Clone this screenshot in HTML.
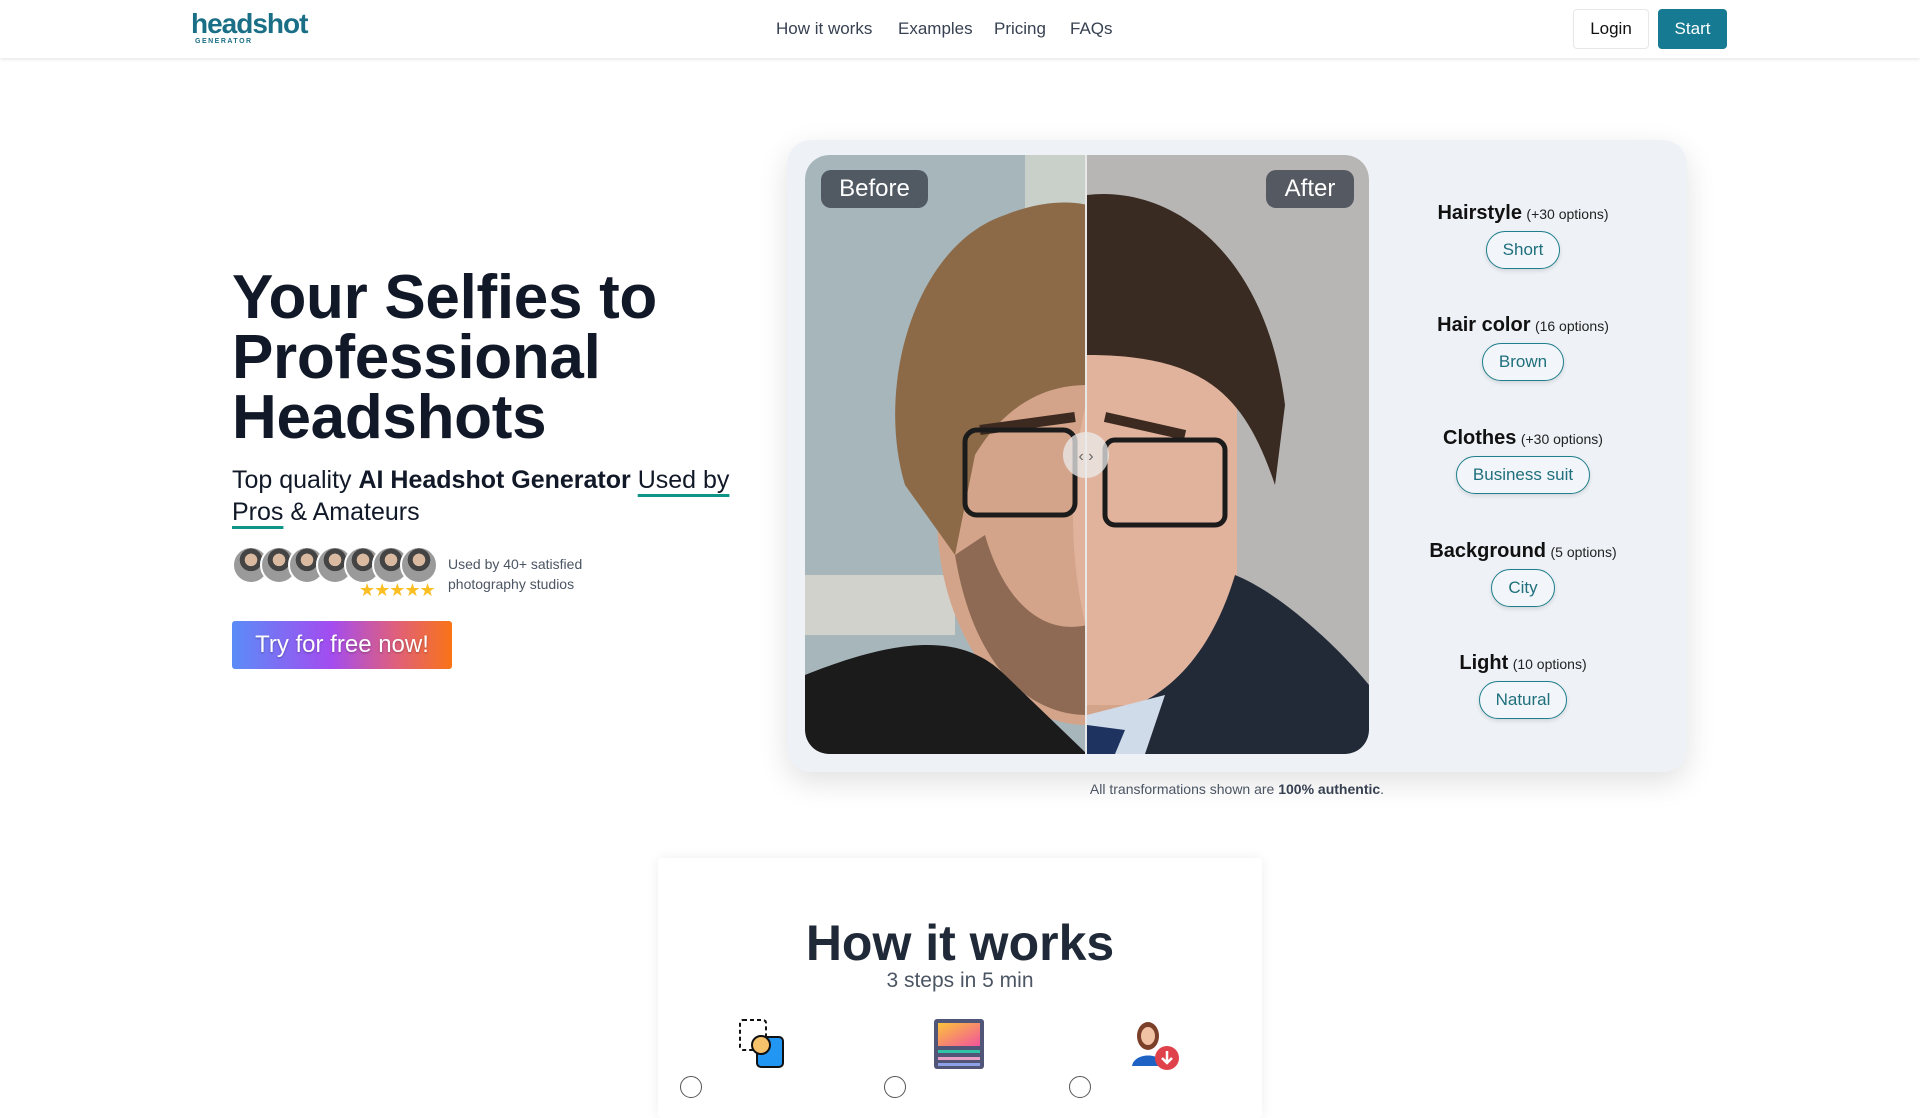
<!DOCTYPE html>
<html><head><meta charset="utf-8">
<style>
*{box-sizing:border-box;margin:0;padding:0}
body{width:1920px;height:1080px;overflow:hidden;background:#fff;font-family:"Liberation Sans",sans-serif;color:#111827;position:relative}
.abs{position:absolute}
header{position:absolute;left:0;top:0;width:1920px;height:58px;background:#fff;box-shadow:0 1px 4px rgba(0,0,0,.12)}
.nav a{position:absolute;top:19px;font-size:17px;color:#374151;text-decoration:none}
.btn{position:absolute;top:9px;height:40px;border-radius:4px;font-size:17px;display:flex;align-items:center;justify-content:center}
h1{position:absolute;left:232px;top:268px;font-size:62px;line-height:60px;font-weight:700;color:#111827;letter-spacing:-0.3px}
.sub{position:absolute;left:232px;top:464px;font-size:25px;line-height:32px;color:#111827;width:540px}
.u{text-decoration:underline;text-decoration-color:#0f9488;text-decoration-thickness:3px;text-underline-offset:6px}
.av{position:absolute;top:546px;width:38px;height:38px;border-radius:50%;border:2px solid #fff;background:radial-gradient(circle at 50% 35%,#d9b9a0 0 22%,#444 23% 40%,#9a9a9a 41%)}
.card{position:absolute;left:787px;top:140px;width:900px;height:632px;background:#eef2f7;border-radius:24px;box-shadow:0 10px 30px rgba(0,0,0,.12)}
.opt{position:absolute;width:300px;left:1373px;text-align:center}
.opt b{font-size:20px;color:#111}
.opt span{font-size:14px;color:#222}
.opt .pill{display:inline-block;margin-top:6px;border:1.5px solid #1f7f8c;color:#1f6f7c;border-radius:20px;padding:8px 16px;font-size:17px;background:#f2f6fa;box-shadow:0 2px 4px rgba(0,0,0,.12)}
.lab{position:absolute;top:170px;height:38px;border-radius:10px;background:rgba(60,66,78,.8);color:#fff;font-size:24px;display:flex;align-items:center;justify-content:center}
</style></head><body>
<header>
 <div class="abs" style="left:191px;top:8px;font-size:28px;font-weight:700;color:#1a6f86;letter-spacing:-1px">headshot</div>
 <div class="abs" style="left:195px;top:38px;font-size:7px;font-weight:700;color:#1a6f86;letter-spacing:1.5px">GENERATOR</div>
 <div class="nav"><a style="left:776px">How it works</a><a style="left:898px">Examples</a><a style="left:994px">Pricing</a><a style="left:1070px">FAQs</a></div>
 <div class="btn" style="left:1573px;width:76px;border:1px solid #e5e7eb;color:#111">Login</div>
 <div class="btn" style="left:1658px;width:69px;background:#167a93;color:#fff">Start</div>
</header>

<h1>Your Selfies to<br>Professional<br>Headshots</h1>
<div class="sub">Top quality <b>AI Headshot Generator</b> <span class="u">Used by</span><br><span class="u">Pros</span> &amp; Amateurs</div>
<div class="av" style="left:232px"></div><div class="av" style="left:260px"></div><div class="av" style="left:288px"></div><div class="av" style="left:316px"></div><div class="av" style="left:344px"></div><div class="av" style="left:372px"></div><div class="av" style="left:400px"></div>
<div class="abs" style="left:359px;top:580px;color:#fbbf24;font-size:18px;letter-spacing:-1px">★★★★★</div>
<div class="abs" style="left:448px;top:554px;font-size:14px;line-height:20px;color:#4b5563">Used by 40+ satisfied<br>photography studios</div>
<div class="abs" style="left:232px;top:621px;width:220px;height:48px;border-radius:3px;background:linear-gradient(90deg,#5b8cf7,#a34cf0 45%,#e0607a 75%,#f97316);color:#fff;font-size:24px;display:flex;align-items:center;justify-content:center;text-shadow:0 1px 2px rgba(0,0,0,.3)">Try for free now!</div>

<div class="card"></div>
<svg class="abs" style="left:805px;top:155px;border-radius:24px" width="564" height="599" viewBox="0 0 564 599">
 <defs><clipPath id="c"><rect width="564" height="599" rx="24"/></clipPath></defs>
 <g clip-path="url(#c)">
 <rect width="282" height="599" fill="#a7b6bb"/>
 <rect x="282" width="282" height="599" fill="#b7b6b5"/>
 <rect x="220" y="0" width="62" height="120" fill="#c9cfc9"/>
 <rect x="0" y="420" width="150" height="60" fill="#d2d2cc"/>
 <ellipse cx="282" cy="360" rx="150" ry="210" fill="#d4a48a"/>
 <rect x="282" y="150" width="150" height="400" fill="#e1b39c"/>
 <ellipse cx="350" cy="360" rx="82" ry="205" fill="#e1b39c"/>
 <path d="M100 330 C70 230 110 90 200 60 C250 40 282 50 282 50 L282 230 C240 230 200 250 170 300 L150 400 Z" fill="#8c6a48"/>
 <path d="M282 40 C360 30 460 90 480 250 L470 330 C440 240 400 200 282 200 Z" fill="#392a22"/>
 <path d="M150 400 C170 520 230 560 282 560 L282 470 C240 480 200 450 180 380 Z" fill="#8e6a54"/>
 <path d="M0 520 C100 480 160 480 200 520 L282 599 L0 599 Z" fill="#1b1b1b"/>
 <path d="M282 599 L282 560 C340 560 400 520 430 420 C480 440 540 500 564 530 L564 599 Z" fill="#222a38"/>
 <path d="M282 560 L360 540 L340 599 L282 599 Z" fill="#cfdbe8"/>
 <path d="M282 570 L320 575 L310 599 L282 599 Z" fill="#1e3360"/>
 <path d="M175 275 L270 262 M300 262 L380 280" stroke="#3c2a20" stroke-width="10" fill="none"/>
 <rect x="160" y="275" width="110" height="85" rx="12" fill="none" stroke="#1b1b1b" stroke-width="5"/>
 <rect x="300" y="285" width="120" height="85" rx="10" fill="none" stroke="#1b1b1b" stroke-width="5"/>
 <line x1="281" y1="0" x2="281" y2="599" stroke="#e8e8e8" stroke-width="2"/>
 <circle cx="281" cy="300" r="23" fill="rgba(235,235,235,.75)"/>
 <text x="281" y="306" font-size="16" text-anchor="middle" fill="#666" font-family="Liberation Sans">‹ ›</text>
 </g>
</svg>
<div class="lab" style="left:821px;width:107px">Before</div>
<div class="lab" style="left:1266px;width:88px">After</div>

<div class="opt" style="top:202px"><b>Hairstyle</b> <span>(+30 options)</span><br><span class="pill">Short</span></div>
<div class="opt" style="top:314px"><b>Hair color</b> <span>(16 options)</span><br><span class="pill">Brown</span></div>
<div class="opt" style="top:427px"><b>Clothes</b> <span>(+30 options)</span><br><span class="pill">Business suit</span></div>
<div class="opt" style="top:540px"><b>Background</b> <span>(5 options)</span><br><span class="pill">City</span></div>
<div class="opt" style="top:652px"><b>Light</b> <span>(10 options)</span><br><span class="pill">Natural</span></div>
<div class="abs" style="left:937px;width:600px;top:781px;text-align:center;font-size:14px;color:#4b5563">All transformations shown are <b style="color:#374151">100% authentic</b>.</div>

<div class="abs" style="left:658px;top:858px;width:604px;height:260px;background:#fff;box-shadow:0 0 12px rgba(0,0,0,.07);border-radius:4px"></div>
<div class="abs" style="left:658px;width:604px;top:914px;text-align:center;font-size:50px;font-weight:700;color:#1f2937">How it works</div>
<div class="abs" style="left:658px;width:604px;top:969px;text-align:center;font-size:21px;color:#4b5563">3 steps in 5 min</div>
<svg class="abs" style="left:735px;top:1015px" width="60" height="60"><rect x="5" y="5" width="26" height="30" rx="3" fill="none" stroke="#111" stroke-width="2" stroke-dasharray="4 3"/><rect x="22" y="22" width="26" height="30" rx="4" fill="#2196f3" stroke="#111" stroke-width="2"/><circle cx="26" cy="30" r="9" fill="#f6c26b" stroke="#111" stroke-width="2"/></svg>
<svg class="abs" style="left:933px;top:1018px" width="52" height="52"><rect x="1" y="1" width="50" height="50" rx="3" fill="#515577"/><rect x="5" y="5" width="42" height="23" fill="url(#g)"/><defs><linearGradient id="g" x1="0" y1="0" x2="1" y2="1"><stop offset="0" stop-color="#fcc33b"/><stop offset="1" stop-color="#f2549b"/></linearGradient></defs><rect x="5" y="32" width="42" height="3" fill="#2ec4a5"/><rect x="5" y="39" width="42" height="3" fill="#e8a1c4"/><rect x="5" y="45" width="42" height="3" fill="#8ea0e8"/></svg>
<svg class="abs" style="left:1128px;top:1018px" width="54" height="54"><ellipse cx="20" cy="18" rx="11" ry="14" fill="#7b3f2a"/><ellipse cx="20" cy="18" rx="7" ry="9" fill="#f1c2a4"/><path d="M4 48 C6 34 34 34 36 48Z" fill="#1e63c4"/><circle cx="39" cy="40" r="12" fill="#e0424b"/><path d="M39 33 V44 M34 40 L39 45 L44 40" stroke="#fff" stroke-width="2.5" fill="none"/></svg>
<div class="abs" style="left:680px;top:1076px;width:22px;height:22px;border:1.5px solid #555;border-radius:50%"></div>
<div class="abs" style="left:884px;top:1076px;width:22px;height:22px;border:1.5px solid #555;border-radius:50%"></div>
<div class="abs" style="left:1069px;top:1076px;width:22px;height:22px;border:1.5px solid #555;border-radius:50%"></div>
</body></html>
